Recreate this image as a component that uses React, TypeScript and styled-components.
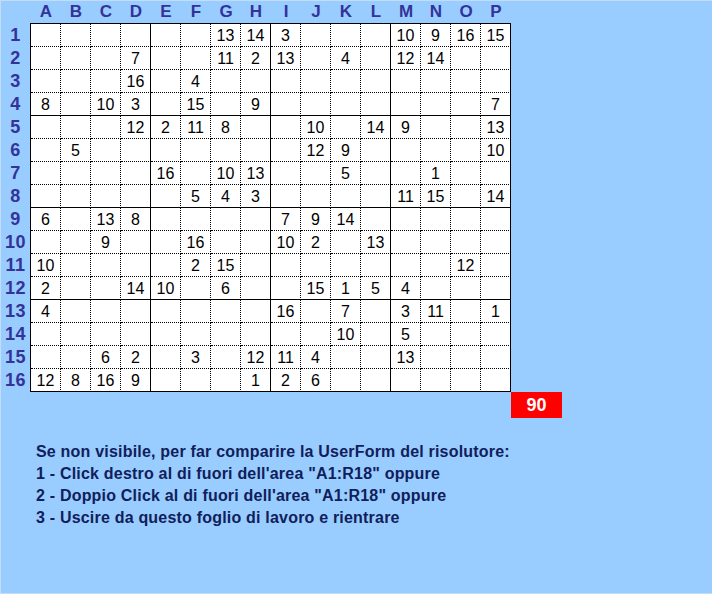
import React from "react";
import styled, { createGlobalStyle } from "styled-components";

const GlobalStyle = createGlobalStyle`
  html, body {
    margin: 0;
    padding: 0;
    background: #99ccff;
  }
  body {
    font-family: "Liberation Sans", Arial, sans-serif;
  }
`;

const Page = styled.div`
  width: 712px;
  height: 594px;
  box-sizing: border-box;
  background: #99ccff;
  border-left: 1px solid #c4dcf4;
  border-top: 1px solid #c4dcf4;
  border-bottom: 1px solid #c4dcf4;
  display: flex;
  flex-direction: column;
`;

const HeaderRow = styled.div`
  display: flex;
  height: 22px;
  padding-left: 30px;
`;

const ColHead = styled.div`
  width: 30px;
  display: flex;
  align-items: center;
  justify-content: center;
  font-weight: bold;
  font-size: 17px;
  color: #333399;
`;

const Body = styled.div`
  display: flex;
`;

const RowHeads = styled.div`
  width: 29px;
  padding-top: 1px;
  display: flex;
  flex-direction: column;
`;

const RowHead = styled.div`
  height: 23px;
  display: flex;
  align-items: center;
  justify-content: center;
  font-weight: bold;
  font-size: 18px;
  letter-spacing: 0.5px;
  color: #333399;
`;

const Board = styled.div`
  display: grid;
  grid-template-columns: repeat(16, 30px);
  grid-template-rows: repeat(16, 23px);
  border-left: 1px solid #000;
  border-top: 1px solid #000;
  background: #fff;
`;

const Cell = styled.div<{ $thickR: boolean; $thickB: boolean }>`
  box-sizing: border-box;
  border-right: 1px ${(p) => (p.$thickR ? "solid" : "dotted")} #000;
  border-bottom: 1px ${(p) => (p.$thickB ? "solid" : "dotted")} #000;
  display: flex;
  align-items: center;
  justify-content: center;
  font-size: 16px;
  color: #000;
  padding-top: 1px;
`;

const ScoreRow = styled.div`
  display: flex;
  padding-left: 510px;
`;

const Score = styled.div`
  width: 51px;
  height: 26px;
  background: #ff0000;
  color: #fff;
  font-weight: bold;
  font-size: 18px;
  display: flex;
  align-items: center;
  justify-content: center;
`;

const Notes = styled.div`
  margin-top: 23px;
  padding-left: 35px;
  display: flex;
  flex-direction: column;
`;

const Note = styled.div`
  font-weight: bold;
  font-size: 16px;
  letter-spacing: 0.2px;
  line-height: 22px;
  color: #10205a;
  white-space: nowrap;
`;

const cols = "ABCDEFGHIJKLMNOP".split("");

const data: string[] = [
  "G13 H14 I3 M10 N9 O16 P15",
  "D7 G11 H2 I13 K4 M12 N14",
  "D16 F4",
  "A8 C10 D3 F15 H9 P7",
  "D12 E2 F11 G8 J10 L14 M9 P13",
  "B5 J12 K9 P10",
  "E16 G10 H13 K5 N1",
  "F5 G4 H3 M11 N15 P14",
  "A6 C13 D8 I7 J9 K14",
  "C9 F16 I10 J2 L13",
  "A10 F2 G15 O12",
  "A2 D14 E10 G6 J15 K1 L5 M4",
  "A4 I16 K7 M3 N11 P1",
  "K10 M5",
  "C6 D2 F3 H12 I11 J4 M13",
  "A12 B8 C16 D9 H1 I2 J6",
];

const grid: string[][] = data.map((row) => {
  const r = new Array(16).fill("");
  row.split(" ").forEach((tok) => {
    const c = cols.indexOf(tok[0]);
    r[c] = tok.slice(1);
  });
  return r;
});

const notes = [
  "Se non visibile, per far comparire la UserForm del risolutore:",
  '1 - Click destro al di fuori dell\'area "A1:R18" oppure',
  '2 - Doppio Click al di fuori dell\'area "A1:R18" oppure',
  "3 - Uscire da questo foglio di lavoro e rientrare",
];

export default function App() {
  return (
    <>
      <GlobalStyle />
      <Page>
        <HeaderRow>
          {cols.map((c) => (
            <ColHead key={c}>{c}</ColHead>
          ))}
        </HeaderRow>
        <Body>
          <RowHeads>
            {grid.map((_, i) => (
              <RowHead key={i}>{i + 1}</RowHead>
            ))}
          </RowHeads>
          <Board>
            {grid.map((row, r) =>
              row.map((v, c) => (
                <Cell
                  key={`${r}-${c}`}
                  $thickR={c % 4 === 3}
                  $thickB={r % 4 === 3}
                >
                  {v}
                </Cell>
              ))
            )}
          </Board>
        </Body>
        <ScoreRow>
          <Score>90</Score>
        </ScoreRow>
        <Notes>
          {notes.map((n, i) => (
            <Note key={i}>{n}</Note>
          ))}
        </Notes>
      </Page>
    </>
  );
}
